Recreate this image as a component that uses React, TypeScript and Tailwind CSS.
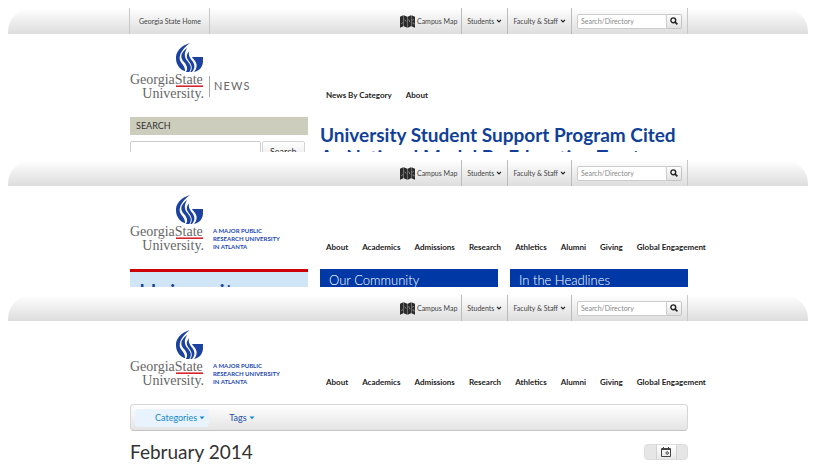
import { ReactNode } from "react";

const mainNav = [
  "About",
  "Academics",
  "Admissions",
  "Research",
  "Athletics",
  "Alumni",
  "Giving",
  "Global Engagement",
];

function Container({ className = "", children }: { className?: string; children: ReactNode }) {
  return <div className={`mx-auto w-full max-w-[560px] pl-[2px] ${className}`}>{children}</div>;
}

function Caret({ className = "" }: { className?: string }) {
  return (
    <svg viewBox="0 0 6 4" className={`h-1 w-1.5 ${className}`} aria-hidden="true">
      <path d="M0.5 0.5H5.5L3 3.2Z" fill="currentColor" />
    </svg>
  );
}

function Chevron() {
  return (
    <svg viewBox="0 0 6 4" className="h-1 w-1.5" aria-hidden="true">
      <path d="M1 0.8L3 2.8L5 0.8" fill="none" stroke="#222" strokeWidth="1.2" />
    </svg>
  );
}

function MapIcon() {
  return (
    <svg viewBox="0 0 45 39" className="h-[13px] w-[15px]" aria-hidden="true">
      <path d="M0 5L10 1V34L0 38Z M11 1L22 5V38L11 34Z M23 5L33 1V34L23 38Z M34 1L45 5V38L34 34Z" fill="#2b2b2b" />
      <path d="M4 27L8 22M14 14L19 20M26 13L30 22M36 16L42 13M37 24H42V29" fill="none" stroke="#aaa" strokeWidth="2" />
    </svg>
  );
}

function SearchIcon() {
  return (
    <svg viewBox="0 0 8 8" className="h-2 w-2" aria-hidden="true">
      <circle cx="3.3" cy="3.3" r="2.4" fill="none" stroke="#222" strokeWidth="1.4" />
      <path d="M5 5L7.4 7.4" stroke="#222" strokeWidth="1.7" />
    </svg>
  );
}

function Logo() {
  return (
    <svg viewBox="0 0 75 61" className="h-[61px] w-[75px] shrink-0" role="img" aria-label="Georgia State University">
      <g transform="translate(46 1) scale(0.333)" fill="#1c429f">
        <path d="M42 0C15 8 -2 26 0 48C1 66 12 80 27 85C28 76 24 68 16 59C4 45 14 20 42 0Z" />
        <path d="M34 14C12 30 12 44 24 57C34 68 36 77 30 87H40C48 76 45 66 34 54C24 42 24 29 34 14Z" />
        <path d="M40 24C29 36 31 45 40 56C48 67 50 77 43 87H48C57 77 58 66 49 54C40 43 36 34 40 24Z" />
        <path d="M48 42H81V56C80 73 69 84 54 87C63 77 64 66 59 57C55 51 51 47 48 42Z" />
      </g>
      <g fill="#666" fontFamily="'Liberation Serif', serif">
        <text x="0" y="42" fontSize="14">GeorgiaState</text>
        <text x="74" y="56" fontSize="14" textAnchor="end">University.</text>
      </g>
      <path d="M46 43.4H73V45H46Z" fill="#d8232a" />
    </svg>
  );
}

function TopBar({ id, home = false }: { id: string; home?: boolean }) {
  return (
    <div className="rounded-t-[24px] bg-linear-to-b from-white to-[#dddddd]">
      <div className="mx-auto flex h-[26px] w-full max-w-[560px] pl-px text-[7px] text-[#444]">
        {home && (
          <a href="#home" className="flex items-center border-x border-[#c8c8c8] pr-2 pl-[9px]">
            Georgia State Home
          </a>
        )}
        <div className="ml-auto flex border-r border-[#c8c8c8]">
          <a href="#map" className="flex items-center gap-[2px] pr-1">
            <MapIcon />
            Campus Map
          </a>
          <button type="button" className="flex items-center gap-[2px] border-l border-[#bbb] px-[5px]">
            Students
            <Chevron />
          </button>
          <button type="button" className="flex items-center gap-[2px] border-l border-[#bbb] px-[5px]">
            Faculty &amp; Staff
            <Chevron />
          </button>
          <form className="flex items-center border-l border-[#bbb] px-[5px]">
            <input
              id={id}
              type="text"
              aria-label="Search directory"
              placeholder="Search/Directory"
              className="h-[15px] w-[90px] rounded-l-xs border border-[#ccc] bg-white px-[3px] text-[7px] placeholder:text-[#888]"
            />
            <button
              type="button"
              aria-label="Search"
              className="flex h-[15px] w-[15px] items-center justify-center rounded-r-xs border border-l-0 border-[#c4c4c4] bg-linear-to-b from-white to-[#e2e2e2]"
            >
              <SearchIcon />
            </button>
          </form>
        </div>
      </div>
    </div>
  );
}

function Tagline() {
  return (
    <p className="pt-[33px] pl-1 text-[6px] leading-[8px] font-bold whitespace-nowrap text-[#1c49b0]">
      A MAJOR PUBLIC
      <br />
      RESEARCH UNIVERSITY
      <br />
      IN ATLANTA
    </p>
  );
}

function Header({ items, aside }: { items: string[]; aside: ReactNode }) {
  return (
    <Container className="flex h-[83px] pt-2">
      <Logo />
      <div className="w-[121px] shrink-0 pl-1">{aside}</div>
      <nav className="flex gap-3.5 pt-[48px] text-[8px] leading-[10px] font-bold whitespace-nowrap text-[#222]">
        {items.map((item) => (
          <a key={item} href="#section">
            {item}
          </a>
        ))}
      </nav>
    </Container>
  );
}

function NewsPage() {
  return (
    <section className="h-[144px] overflow-hidden">
      <TopBar id="directory-news" home />
      <Header
        items={["News By Category", "About"]}
        aside={
          <div className="mt-[34px] flex h-[21px] items-center border-l border-[#aaa] pl-1 text-[11px] tracking-widest text-[#666]">
            NEWS
          </div>
        }
      />
      <Container className="grid grid-cols-3 gap-3">
        <form>
          <label htmlFor="news-search" className="block bg-[#cdcdbd] px-1.5 text-[9px] leading-[18px] text-[#333]">
            SEARCH
          </label>
          <div className="flex gap-px pt-1.5">
            <input id="news-search" type="text" className="h-[22px] w-[131px] rounded-xs border border-[#ccc] bg-white px-1 text-[9px]" />
            <button
              type="button"
              className="h-[22px] rounded-xs border border-[#d4d4d4] bg-linear-to-b from-white to-[#e6e6e6] px-[7px] text-[9px] text-[#333]"
            >
              Search
            </button>
          </div>
        </form>
        <h1 className="col-span-2 pt-[7px] text-[19px] leading-[22px] font-bold text-[#113f98]">
          University Student Support Program Cited As National Model By Education Trust
        </h1>
      </Container>
    </section>
  );
}

function HomePage() {
  return (
    <section className="h-[127px] overflow-hidden">
      <TopBar id="directory-home" />
      <Header items={mainNav} aside={<Tagline />} />
      <Container className="grid grid-cols-3 gap-3">
        <div className="border-t-[3px] border-[#cc0000] bg-[#d0e5f5] px-[9px] pt-1.5 text-[24px] leading-[28px] text-[#113f98]">
          <h2>University</h2>
        </div>
        <h2 className="bg-[#0039a6] px-[9px] text-[13px] leading-[22px] font-light text-white">Our Community</h2>
        <h2 className="bg-[#0039a6] px-[9px] text-[13px] leading-[22px] font-light text-white">In the Headlines</h2>
      </Container>
    </section>
  );
}

function CalendarPage() {
  return (
    <section>
      <TopBar id="directory-calendar" />
      <Header items={mainNav} aside={<Tagline />} />
      <Container>
        <div className="flex h-[27px] items-center rounded-sm border border-[#d6d6d6] border-b-[#c4c4c4] bg-linear-to-b from-white to-[#e4e4e4] pl-1 text-[9px]">
          <button type="button" className="flex h-[18px] items-center gap-[2px] rounded-sm bg-[#e8f3fd] pr-1 pl-5 text-[#1488c8]">
            Categories
            <Caret />
          </button>
          <button type="button" className="flex h-[18px] items-center gap-[2px] pl-5 text-[#1c4fa8]">
            Tags
            <Caret className="text-[#1488c8]" />
          </button>
        </div>
        <div className="flex items-center justify-between pt-[9px]">
          <h1 className="text-[19px] leading-6 text-[#333]">February 2014</h1>
          <div className="flex h-4 w-[44px] justify-center rounded-sm border border-[#dcdcdc] bg-[#e6e6e6]">
            <button
              type="button"
              aria-label="Choose date"
              className="flex w-[21px] items-center justify-center border-x border-[#d2d2d2] bg-linear-to-b from-white to-[#e8e8e8]"
            >
              <svg viewBox="0 0 10 10" className="h-2.5 w-2.5" aria-hidden="true">
                <path d="M0.5 1.5H9.5V9.5H0.5Z M0.5 2.5H9.5" fill="none" stroke="#444" />
                <path d="M2.5 0V2.5M7.5 0V2.5" stroke="#444" />
                <circle cx="6.2" cy="6" r="1.2" fill="none" stroke="#444" />
              </svg>
            </button>
          </div>
        </div>
      </Container>
    </section>
  );
}

export default function App() {
  return (
    <main className="flex flex-col gap-2 overflow-hidden bg-white p-2 font-['Lato','Open_Sans',sans-serif]">
      <NewsPage />
      <HomePage />
      <CalendarPage />
    </main>
  );
}
